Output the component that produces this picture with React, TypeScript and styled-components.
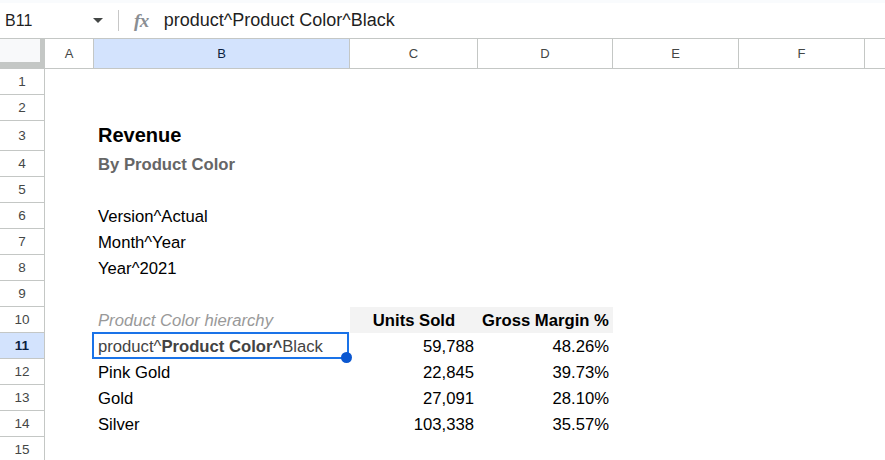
import React from 'react';
import styled, {createGlobalStyle} from 'styled-components';

const GlobalStyle = createGlobalStyle`
  html, body {
    margin: 0;
    padding: 0;
    background: #ffffff;
    overflow: hidden;
  }
  body {
    font-family: 'Liberation Sans', Arial, sans-serif;
  }
`;

const Page = styled.div`
  width: 885px;
  height: 460px;
  overflow: hidden;
  background: #ffffff;
`;

const TopStrip = styled.div`
  height: 3px;
  background: #f9fbfd;
`;

const FormulaBar = styled.div`
  height: 35px;
  display: flex;
  align-items: center;
`;

const NameBox = styled.div`
  width: 118px;
  display: flex;
  align-items: center;
  justify-content: space-between;
  padding: 0 15px 0 5px;
  box-sizing: border-box;
  font-size: 16px;
  color: #1f1f1f;
`;

const Caret = styled.span`
  width: 0;
  height: 0;
  border-left: 5px solid transparent;
  border-right: 5px solid transparent;
  border-top: 5px solid #444746;
`;

const Divider = styled.div`
  width: 1px;
  height: 21px;
  background: #c7c7c7;
`;

const FxIcon = styled.span`
  font-family: 'Liberation Serif', 'Times New Roman', serif;
  font-style: italic;
  font-weight: 700;
  font-size: 19px;
  color: #8a8e93;
  margin: 0 13px 0 15px;
  letter-spacing: -0.5px;
`;

const FormulaText = styled.span`
  font-size: 18px;
  color: #1f1f1f;
  margin-left: 2px;
`;

const Sheet = styled.div`
  display: grid;
  grid-template-columns: 45px 49px 256px 128px 135px 126px 126px 1fr;
  grid-template-rows: 31px 26px 26px 30px repeat(12, 26px);
`;

const Corner = styled.div`
  background: #f8f9fa;
  border-top: 1px solid #c4c7c5;
  border-right: 5px solid #c4c7c5;
  border-bottom: 7px solid #c4c7c5;
`;

const ColHeader = styled.div<{$active?: boolean; $last?: boolean}>`
  display: flex;
  align-items: center;
  justify-content: center;
  font-size: 13px;
  color: ${p => (p.$active ? '#0b1f3f' : '#444746')};
  background: ${p => (p.$active ? '#d3e3fd' : '#ffffff')};
  border-top: 1px solid #c4c7c5;
  border-bottom: 1px solid #c4c7c5;
  border-right: ${p => (p.$last ? 'none' : '1px solid #c4c7c5')};
`;

const RowHeader = styled.div<{$active?: boolean}>`
  display: flex;
  align-items: center;
  justify-content: center;
  font-size: 13.5px;
  color: ${p => (p.$active ? '#0b1f3f' : '#444746')};
  font-weight: ${p => (p.$active ? 700 : 400)};
  background: ${p => (p.$active ? '#d3e3fd' : '#ffffff')};
  border-right: 1px solid #c4c7c5;
  border-bottom: 1px solid #c4c7c5;
`;

const Cell = styled.div<{$align?: 'left' | 'right' | 'center'; $shaded?: boolean}>`
  position: relative;
  display: flex;
  align-items: flex-end;
  justify-content: ${p =>
    p.$align === 'right' ? 'flex-end' : p.$align === 'center' ? 'center' : 'flex-start'};
  padding: 0 4px 3px 4px;
  box-sizing: border-box;
  font-size: 16.67px;
  line-height: 19px;
  color: #000000;
  white-space: nowrap;
  background: ${p => (p.$shaded ? '#f3f3f3' : 'transparent')};
`;

const Title = styled.span`
  font-size: 20px;
  line-height: 23px;
  font-weight: 700;
  padding-bottom: 1px;
`;

const Subtitle = styled.span`
  font-weight: 700;
  color: #666666;
`;

const Hint = styled.span`
  font-style: italic;
  color: #999999;
`;

const Strong = styled.span`
  font-weight: 700;
`;

const RichText = styled.span`
  color: #434343;
`;

const Selection = styled.div`
  position: absolute;
  left: -2px;
  top: -1px;
  right: 1px;
  bottom: 0;
  border: 2px solid #1a73e8;
  pointer-events: none;
`;

const FillHandle = styled.div`
  position: absolute;
  right: -5px;
  bottom: -6px;
  width: 11px;
  height: 11px;
  border-radius: 50%;
  background: #0b57d0;
`;

type Row = {
  b?: React.ReactNode;
  c?: React.ReactNode;
  d?: React.ReactNode;
  header?: boolean;
  selected?: boolean;
};

const rows: Row[] = [
  {},
  {},
  {b: <Title>Revenue</Title>},
  {b: <Subtitle>By Product Color</Subtitle>},
  {},
  {b: 'Version^Actual'},
  {b: 'Month^Year'},
  {b: 'Year^2021'},
  {},
  {
    b: <Hint>Product Color hierarchy</Hint>,
    c: <Strong>Units Sold</Strong>,
    d: <Strong>Gross Margin %</Strong>,
    header: true,
  },
  {
    b: (
      <RichText>
        product^<Strong>Product Color^</Strong>Black
      </RichText>
    ),
    c: '59,788',
    d: '48.26%',
    selected: true,
  },
  {b: 'Pink Gold', c: '22,845', d: '39.73%'},
  {b: 'Gold', c: '27,091', d: '28.10%'},
  {b: 'Silver', c: '103,338', d: '35.57%'},
  {},
];

const columns = ['A', 'B', 'C', 'D', 'E', 'F', ''];

function App() {
  return (
    <Page>
      <GlobalStyle />
      <TopStrip />
      <FormulaBar>
        <NameBox>
          B11
          <Caret />
        </NameBox>
        <Divider />
        <FxIcon>fx</FxIcon>
        <FormulaText>product^Product Color^Black</FormulaText>
      </FormulaBar>
      <Sheet>
        <Corner />
        {columns.map((col, i) => (
          <ColHeader key={i} $active={col === 'B'} $last={i === columns.length - 1}>
            {col}
          </ColHeader>
        ))}
        {rows.map((row, i) => (
          <React.Fragment key={i}>
            <RowHeader $active={row.selected}>{i + 1}</RowHeader>
            <Cell />
            <Cell>
              {row.b}
              {row.selected && (
                <Selection>
                  <FillHandle />
                </Selection>
              )}
            </Cell>
            <Cell $align={row.header ? 'center' : 'right'} $shaded={row.header}>
              {row.c}
            </Cell>
            <Cell $align={row.header ? 'center' : 'right'} $shaded={row.header}>
              {row.d}
            </Cell>
            <Cell />
            <Cell />
            <Cell />
          </React.Fragment>
        ))}
      </Sheet>
    </Page>
  );
}

export default App;
